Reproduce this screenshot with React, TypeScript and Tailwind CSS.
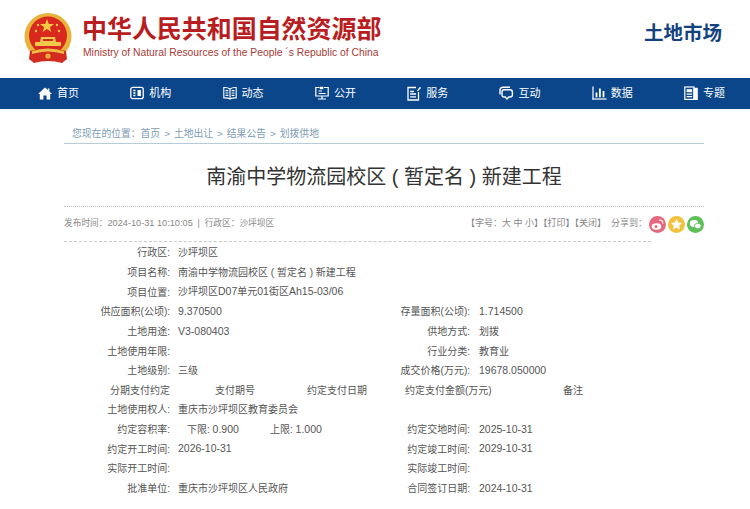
import { ReactNode } from "react";

const font = { fontFamily: '"Liberation Sans", "Noto Sans CJK SC", sans-serif' };

const Emblem = () => (
  <svg width="48" height="50" viewBox="0 0 48 50">
    <circle cx="24" cy="23.5" r="23.5" fill="#e8b33c" />
    <circle cx="24" cy="22.5" r="19" fill="#d9281e" />
    <polygon points="23,6 24.8,11 30,11 25.8,14.2 27.4,19 23,16 18.6,19 20.2,14.2 16,11 21.2,11" fill="#f6c945" />
    <circle cx="14" cy="12" r="1.2" fill="#f6c945" />
    <circle cx="12" cy="18" r="1.2" fill="#f6c945" />
    <circle cx="33" cy="12" r="1.2" fill="#f6c945" />
    <circle cx="35" cy="18" r="1.2" fill="#f6c945" />
    <path d="M11 33 L37 33 L37 29 L32 29 L31 24 L17 24 L16 29 L11 29 Z" fill="#f3c64c" />
    <rect x="19" y="26" width="10" height="2" fill="#c9301f" />
    <path d="M6 38 Q24 32 42 38 L43 46 L38 50 Q24 46 10 50 L5 46 Z" fill="#d22c20" />
    <path d="M8 38 Q24 33 40 38 L40 41 Q24 36 8 41 Z" fill="#edbb46" />
    <circle cx="24" cy="43" r="2.6" fill="#e8b33c" />
  </svg>
);

const icons: Record<string, ReactNode> = {
  home: (
    <path d="M7 1.5 L9.8 4 V2.4 H11.4 V5.4 L14 8 H12.2 V13.5 H8.6 V9.4 H5.4 V13.5 H1.8 V8 H0 Z" fill="white" />
  ),
  org: (
    <g fill="none" stroke="white" strokeWidth="1.3">
      <rect x="0.8" y="1.3" width="12.4" height="11.4" rx="2" />
      <path d="M3.3 4.5 H5.5 M3.3 7 H5.5 M3.3 9.5 H5.5" />
      <rect x="7.5" y="4" width="3.4" height="6" fill="white" stroke="none" />
    </g>
  ),
  book: (
    <g fill="none" stroke="white" strokeWidth="1.1">
      <path d="M7 3 Q4.5 1.2 0.8 1.6 V12 Q4.5 11.6 7 13 Q9.5 11.6 13.2 12 V1.6 Q9.5 1.2 7 3 Z M7 3 V13" />
      <path d="M2.5 4.6 H5.4 M2.5 7 H5.4 M2.5 9.4 H5.4 M8.6 4.6 H11.5 M8.6 7 H11.5 M8.6 9.4 H11.5" />
    </g>
  ),
  screen: (
    <g fill="none" stroke="white" strokeWidth="1.2">
      <path d="M4.5 1.5 H0.8 V10 H13.2 V1.5 H9" />
      <path d="M3 13 H11 M7 10 V13" />
      <path d="M3.5 5 H7 M3.5 7.5 H10.5" />
      <rect x="4.8" y="0.8" width="3.5" height="2.4" fill="white" stroke="none" />
    </g>
  ),
  note: (
    <g fill="none" stroke="white" strokeWidth="1.3">
      <path d="M9 1.5 H1 V14 H11.5 V6" />
      <path d="M3.2 5.5 H7 M3.2 8 H9 M3.2 10.8 H9" />
      <path d="M10 4.5 L13 0.8 L14 2 L11 5.3 Z" fill="white" stroke="none" />
    </g>
  ),
  chat: (
    <g fill="none" stroke="white" strokeWidth="1.4">
      <path d="M1 8.5 V4 Q1 1.2 4 1.2 H11" />
      <path d="M5 3.8 H11 Q13.4 3.8 13.4 6.2 V8.8 Q13.4 11 11 11 H9.8 L8 13 L6.3 11 H5 Q3 11 3 8.8 V6 Q3 3.8 5 3.8 Z" />
    </g>
  ),
  chart: (
    <g fill="white">
      <rect x="0.4" y="0.5" width="1.2" height="13" />
      <rect x="0.4" y="12.4" width="14.2" height="1.2" />
      <rect x="3.6" y="6.5" width="1.8" height="4.8" />
      <rect x="7" y="2.5" width="1.8" height="8.8" />
      <rect x="10.6" y="5" width="1.8" height="6.3" />
    </g>
  ),
  paper: (
    <g fill="none" stroke="white" strokeWidth="1.2">
      <rect x="0.8" y="1" width="9.2" height="12.4" />
      <rect x="10" y="2.4" width="3.2" height="11" fill="white" />
      <rect x="2.6" y="3.2" width="5.6" height="3" fill="white" stroke="none" />
      <path d="M2.6 8.2 H8.2 M2.6 10.6 H8.2" />
    </g>
  ),
};

const navItems = [
  ["home", "首页"],
  ["org", "机构"],
  ["book", "动态"],
  ["screen", "公开"],
  ["note", "服务"],
  ["chat", "互动"],
  ["chart", "数据"],
  ["paper", "专题"],
];

// digits in the reference run a bit wider than the CJK text around them
const Num = ({ children }: { children: ReactNode }) => <span className="text-[10.5px]">{children}</span>;

type RowProps = { label: string; value?: ReactNode; label2?: string; value2?: ReactNode };

const Row = ({ label, value, label2, value2 }: RowProps) => (
  <div className="flex h-[19.65px] items-center">
    <div className="w-[106px] text-right">{label}</div>
    <div className="ml-2 w-[193px] whitespace-nowrap">{value}</div>
    {label2 && <div className="w-[99px] text-right">{label2}</div>}
    {label2 && <div className="ml-[9px]">{value2}</div>}
  </div>
);

export default function App() {
  return (
    <div className="h-[509px] w-[750px] overflow-hidden bg-white" style={font}>
      <header className="flex h-[78px] items-start justify-between">
        <div className="flex pl-6 pt-[13px]">
          <Emblem />
          <div className="ml-[10px] mt-[1px]">
            <div className="text-[25px] font-bold leading-[30px] tracking-[-0.05px] text-[#b81d22]">
              中华人民共和国自然资源部
            </div>
            <div className="mt-[2px] whitespace-nowrap pl-[1px] text-[10.35px] leading-[13px] text-[#a83a36]">
              Ministry of Natural Resources of the People ´s Republic of China
            </div>
          </div>
        </div>
        <div className="mr-7 mt-[20px] text-[19.5px] font-bold leading-[26px] text-[#14427f]">土地市场</div>
      </header>

      <nav className="flex h-[31px] items-center bg-[#0a4689] pl-[38px]">
        {navItems.map(([icon, label]) => (
          <div key={label} className="flex w-[92.3px] shrink-0 items-center gap-1 text-[11px] text-white">
            <svg width="15" height="15" viewBox="0 0 15 15">
              {icons[icon]}
            </svg>
            <span>{label}</span>
          </div>
        ))}
      </nav>

      <main className="mx-16 w-[640px]">
        <div className="mt-[17px] flex h-[18px] items-center gap-1 border-b border-[#b8cbd8] pb-[1px] pl-2 text-[9.8px] text-[#7d9cb4]">
          <span>您现在的位置：首页</span>
          <span>&gt;</span>
          <span>土地出让</span>
          <span>&gt;</span>
          <span>结果公告</span>
          <span>&gt;</span>
          <span>划拨供地</span>
        </div>

        <h1 className="flex h-[63px] items-center justify-center whitespace-pre border-b border-dotted border-[#c4c4c4] pt-[3px] text-[20px] leading-[26px] text-[#333]">
          南渝中学物流园校区 ( 暂定名 ) 新建工程
        </h1>

        <div className="flex h-[34px] w-[640px] items-center justify-between text-[8.7px] text-[#888]">
          <div className="whitespace-nowrap">
            发布时间：<span className="text-[9.2px]">2024-10-31 10:10:05</span> &nbsp;|&nbsp; 行政区：沙坪坝区
          </div>
          <div className="flex items-center gap-[2px] text-[9px]">
            <span className="mr-[3px]">
              【字号：大 中 小】【打印】【关闭】
            </span>
            <span>分享到：</span>
            <svg width="17" height="17" viewBox="0 0 17 17">
              <circle cx="8.5" cy="8.5" r="8.5" fill="#e5687f" />
              <ellipse cx="7.5" cy="10.5" rx="4.8" ry="3.2" fill="white" />
              <circle cx="7" cy="10.6" r="1.5" fill="#e5687f" />
              <path d="M10 4 Q14 3.8 13.8 7.6" fill="none" stroke="white" strokeWidth="1.2" />
            </svg>
            <svg width="17" height="17" viewBox="0 0 17 17">
              <circle cx="8.5" cy="8.5" r="8.5" fill="#f2c23f" />
              <polygon points="8.5,3 10.2,6.6 14,7.1 11.2,9.7 12,13.5 8.5,11.6 5,13.5 5.8,9.7 3,7.1 6.8,6.6" fill="white" />
            </svg>
            <svg width="17" height="17" viewBox="0 0 17 17">
              <circle cx="8.5" cy="8.5" r="8.5" fill="#5cbf58" />
              <ellipse cx="7" cy="7.5" rx="4.2" ry="3.4" fill="white" />
              <ellipse cx="10.8" cy="10" rx="3.4" ry="2.7" fill="white" stroke="#5cbf58" strokeWidth="0.8" />
            </svg>
          </div>
        </div>

        <div className="w-[587px] whitespace-pre border-t border-dashed border-[#c9c9c9] pt-[1px] text-[10px] text-[#555]">
          <Row label="行政区:" value="沙坪坝区" />
          <Row label="项目名称:" value="南渝中学物流园校区 ( 暂定名 ) 新建工程" />
          <Row label="项目位置:" value={<>沙坪坝区<Num>D07</Num>单元<Num>01</Num>街区<Num>Ah15-03/06</Num></>} />
          <Row label="供应面积(公顷):" value={<Num>9.370500</Num>} label2="存量面积(公顷):" value2={<Num>1.714500</Num>} />
          <Row label="土地用途:" value={<Num>V3-080403</Num>} label2="供地方式:" value2="划拨" />
          <Row label="土地使用年限:" label2="行业分类:" value2="教育业" />
          <Row label="土地级别:" value="三级" label2="成交价格(万元):" value2={<Num>19678.050000</Num>} />
          <div className="flex h-[19.65px] items-center whitespace-nowrap">
            <div className="w-[106px] text-right">分期支付约定</div>
            <div className="ml-[45px] w-[92px]">支付期号</div>
            <div className="w-[98px]">约定支付日期</div>
            <div className="w-[158px]">约定支付金额(万元)</div>
            <div>备注</div>
          </div>
          <Row label="土地使用权人:" value="重庆市沙坪坝区教育委员会" />
          <div className="flex h-[19.65px] items-center">
            <div className="w-[106px] text-right">约定容积率:</div>
            <div className="ml-[17px] w-[83px]">下限: <Num>0.900</Num></div>
            <div className="w-[101px]">上限: <Num>1.000</Num></div>
            <div className="w-[99px] text-right">约定交地时间:</div>
            <div className="ml-[9px]"><Num>2025-10-31</Num></div>
          </div>
          <Row label="约定开工时间:" value={<Num>2026-10-31</Num>} label2="约定竣工时间:" value2={<Num>2029-10-31</Num>} />
          <Row label="实际开工时间:" label2="实际竣工时间:" />
          <Row label="批准单位:" value="重庆市沙坪坝区人民政府" label2="合同签订日期:" value2={<Num>2024-10-31</Num>} />
        </div>
      </main>
    </div>
  );
}
